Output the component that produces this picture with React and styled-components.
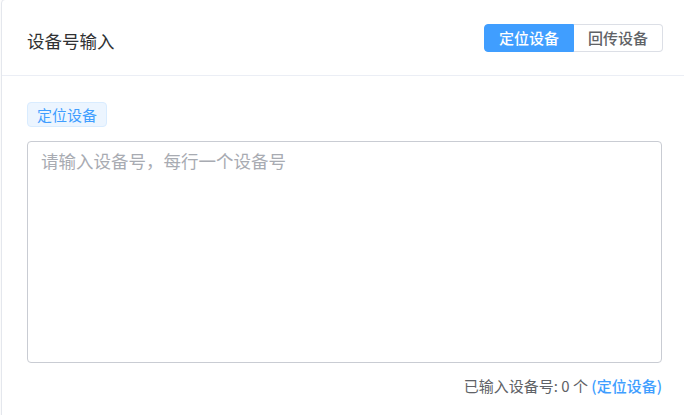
import styled, { createGlobalStyle } from "styled-components";

const GlobalStyle = createGlobalStyle`
  html, body {
    margin: 0;
    padding: 0;
    background: #fff;
    overflow: hidden;
  }
  body {
    font-family: "Noto Sans CJK SC", "Noto Sans", "Liberation Sans", sans-serif;
  }
`;

const Card = styled.div`
  box-sizing: border-box;
  margin: -1px 0 0 1px;
  width: 687px;
  height: 430px;
  border: 1px solid #e4e7ed;
  border-radius: 4px;
  background: #fff;
  box-shadow: 0 2px 12px 0 rgba(0, 0, 0, 0.04);
`;

const Header = styled.div`
  box-sizing: border-box;
  height: 76px;
  display: flex;
  align-items: center;
  justify-content: space-between;
  padding: 1px 24px 0 25px;
  border-bottom: 1px solid #ebeef5;
`;

const Title = styled.span`
  font-size: 17.5px;
  color: #303133;
  padding-top: 5px;
`;

const Group = styled.div`
  display: flex;
  margin-top: -1px;
`;

const GroupButton = styled.button`
  box-sizing: border-box;
  height: 28px;
  padding: 0 14px;
  font-family: inherit;
  font-size: 15px;
  font-weight: 500;
  line-height: 1;
  cursor: pointer;
  color: ${({ $active }) => ($active ? "#fff" : "#606266")};
  background: ${({ $active }) => ($active ? "#409eff" : "#fff")};
  border: 1px solid ${({ $active }) => ($active ? "#409eff" : "#dcdfe6")};
  border-left-width: ${({ $first }) => ($first ? "1px" : "0")};
  border-radius: ${({ $first }) => ($first ? "4px 0 0 4px" : "0 4px 4px 0")};
`;

const Body = styled.div`
  padding: 26px 25px 0 25px;
  display: flex;
  flex-direction: column;
`;

const Tag = styled.span`
  align-self: flex-start;
  box-sizing: border-box;
  height: 25px;
  padding: 0 9px;
  display: inline-flex;
  align-items: center;
  font-size: 15px;
  color: #409eff;
  background: #ecf5ff;
  border: 1px solid #d9ecff;
  border-radius: 4px;
`;

const TextArea = styled.textarea`
  box-sizing: border-box;
  margin-top: 14px;
  height: 222px;
  width: 100%;
  resize: none;
  padding: 6px 13px;
  font-family: inherit;
  font-size: 17.5px;
  line-height: 26px;
  color: #606266;
  border: 1px solid #c9ccd3;
  border-radius: 4px;
  outline: none;
  &::placeholder {
    color: #a8abb2;
  }
`;

const Footer = styled.div`
  margin-top: 13px;
  text-align: right;
  font-size: 15px;
  line-height: 20px;
  color: #606266;
`;

const Link = styled.span`
  color: #409eff;
  font-weight: 500;
`;

export default function App() {
  return (
    <>
      <GlobalStyle />
      <Card>
        <Header>
          <Title>设备号输入</Title>
          <Group>
            <GroupButton $active $first>定位设备</GroupButton>
            <GroupButton>回传设备</GroupButton>
          </Group>
        </Header>
        <Body>
          <Tag>定位设备</Tag>
          <TextArea placeholder="请输入设备号，每行一个设备号" />
          <Footer>
            已输入设备号: 0 个 <Link>(定位设备)</Link>
          </Footer>
        </Body>
      </Card>
    </>
  );
}
